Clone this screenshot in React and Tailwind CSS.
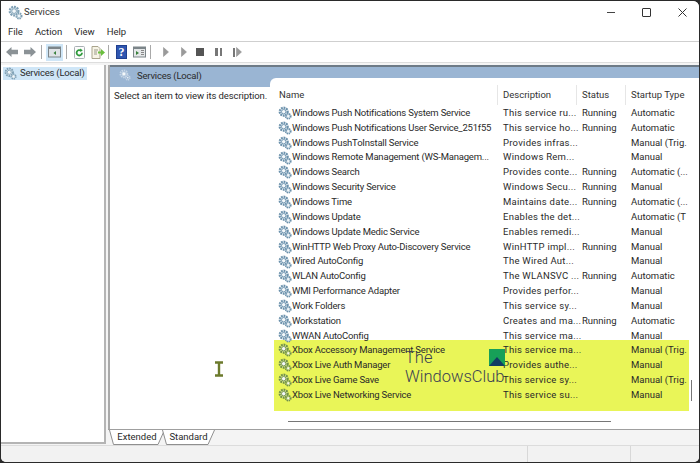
import React from 'react';

const ROWS = [
    ['Windows Push Notifications System Service', 'This service ru...', 'Running', 'Automatic'],
    ['Windows Push Notifications User Service_251f55', 'This service ho...', 'Running', 'Automatic'],
    ['Windows PushToInstall Service', 'Provides infras...', '', 'Manual (Trig.'],
    ['Windows Remote Management (WS-Managem...', 'Windows Rem...', '', 'Manual'],
    ['Windows Search', 'Provides conte...', 'Running', 'Automatic (...'],
    ['Windows Security Service', 'Windows Secu...', 'Running', 'Manual'],
    ['Windows Time', 'Maintains date...', 'Running', 'Automatic (...'],
    ['Windows Update', 'Enables the det...', '', 'Automatic (T'],
    ['Windows Update Medic Service', 'Enables remedi...', '', 'Manual'],
    ['WinHTTP Web Proxy Auto-Discovery Service', 'WinHTTP impl...', 'Running', 'Manual'],
    ['Wired AutoConfig', 'The Wired Aut...', '', 'Manual'],
    ['WLAN AutoConfig', 'The WLANSVC ...', 'Running', 'Automatic'],
    ['WMI Performance Adapter', 'Provides perfor...', '', 'Manual'],
    ['Work Folders', 'This service sy...', '', 'Manual'],
    ['Workstation', 'Creates and ma...', 'Running', 'Automatic'],
    ['WWAN AutoConfig', 'This service ma...', '', 'Manual'],
];

const XBOX_ROWS = [
    ['Xbox Accessory Management Service', 'This service ma...', '', 'Manual (Trig.'],
    ['Xbox Live Auth Manager', 'Provides authe...', '', 'Manual'],
    ['Xbox Live Game Save', 'This service sy...', '', 'Manual (Trig.'],
    ['Xbox Live Networking Service', 'This service su...', '', 'Manual'],
];

function Gears({ size = 14, tone = '#6a90ab', fill = '#d5e2ea' }) {
    return (
        <svg width={size} height={size} viewBox="0 0 16 16" className="shrink-0">
            <circle cx="6.500" cy="6.500" r="4.600" fill={fill} stroke={tone} strokeWidth="2.400" strokeDasharray="2 1" />
            <circle cx="6.500" cy="6.500" r="2.500" fill="#f4f8fa" stroke={tone} strokeWidth="1" />
            <circle cx="11.700" cy="11.700" r="2.800" fill={fill} stroke={tone} strokeWidth="2" strokeDasharray="1.500 0.800" />
            <circle cx="11.700" cy="11.700" r="1.100" fill="#f4f8fa" />
        </svg>
    );
}

function Row({ row, tone, fill }) {
    return (
        <div className="flex h-[14.87px] items-center whitespace-nowrap">
            <div className="flex w-[232px] shrink-0 items-center pl-[7px]">
                <Gears tone={tone} fill={fill} />
                <span className="tracking-[-0.2px]">{row[0]}</span>
            </div>
            <div className="w-[79px] shrink-0 tracking-[0.25px]">{row[1]}</div>
            <div className="w-[49px] shrink-0">{row[2]}</div>
            <div className="shrink-0">{row[3]}</div>
        </div>
    );
}

function HeaderCell({ label, className }) {
    return (
        <div className={`flex h-[20px] items-center border-r border-[#e6e6e6] ${className}`}>{label}</div>
    );
}

function Sep({ className }) {
    return <div className={`h-[14px] w-px bg-[#a9a9a9] ${className}`} />;
}

function Play({ className }) {
    return (
        <svg width="6" height="10" viewBox="0 0 6 10" className={className}>
            <path d="M.5.500l5 4.500-5 4.500z" fill="#9a9a9a" stroke="#8a8a8a" strokeWidth="0.500" />
        </svg>
    );
}

function Toolbar() {
    return (
        <div className="flex h-[18px] items-center pl-[5px]">
            <svg width="12" height="12" viewBox="0 0 12 12"><path d="M0 6l5.500-5v2.800H12v4.400H5.500V11z" fill="#8b9296" /></svg>
            <svg width="12" height="12" viewBox="0 0 12 12" className="ml-[6px]"><path d="M12 6L6.500 1v2.800H0v4.400h6.500V11z" fill="#8b9296" /></svg>
            <Sep className="ml-[5px]" />
            <div className="ml-[4px] flex h-[17px] w-[17px] items-center justify-center bg-[#cfe6f7]">
                <svg width="13" height="12" viewBox="0 0 13 12"><rect x="0.500" y="1" width="12" height="10" fill="#dfe3e6" stroke="#7c8589" /><rect x="0.500" y="1" width="12" height="2" fill="#7c8589" /><path d="M8 5v4L5.500 7z" fill="#38803a" /></svg>
            </div>
            <Sep className="ml-[3px]" />
            <svg width="11" height="13" viewBox="0 0 11 13" className="ml-[7px]"><rect x="0.500" y="0.500" width="10" height="12" rx="1" fill="#fdfdfd" stroke="#a9b0b4" /><path d="M8 6.800a2.700 2.700 0 1 1-1-2.100" fill="none" stroke="#2f9a3c" strokeWidth="1.800" /><path d="M6 2.500l2.800 1.800-2.300 1.600z" fill="#2f9a3c" /></svg>
            <svg width="14" height="13" viewBox="0 0 14 13" className="ml-[6px]"><path d="M1 .5h6l2 2v10H1z" fill="#f7f4e6" stroke="#a9a48c" /><path d="M3 4h4M3 6h3M3 8h3" stroke="#9b9b8a" /><path d="M7 5.500h3V3l4 3.500-4 3.500V7.500H7z" fill="#6bbf3f" /></svg>
            <Sep className="ml-[3px]" />
            <div className="ml-[7px] flex h-[14px] w-[11px] items-center justify-center border border-[#1f3f8f] bg-[#2f56b0] font-['Liberation_Serif',serif] text-[12px] leading-none font-bold text-white">?</div>
            <svg width="13" height="12" viewBox="0 0 13 12" className="ml-[6px]"><rect x="0.500" y="1" width="12" height="10" fill="#e4e7e8" stroke="#7c8589" /><rect x="0.500" y="1" width="12" height="2" fill="#7c8589" /><path d="M3 5v4l3-2z" fill="#38803a" /><path d="M8 4.500h3M8 6.500h3M8 8.500h3" stroke="#888" /></svg>
            <Sep className="ml-[4px]" />
            <Play className="ml-[12px]" />
            <Play className="ml-[12px]" />
            <div className="ml-[9px] h-[8px] w-[8px] bg-[#555555]" />
            <div className="ml-[11px] flex gap-[2px]"><div className="h-[8px] w-[2.500px] bg-[#777777]" /><div className="h-[8px] w-[2.500px] bg-[#777777]" /></div>
            <div className="ml-[11px] flex items-center gap-[1px]">
                <div className="h-[9px] w-[2px] bg-[#777777]" />
                <Play />
            </div>
        </div>
    );
}

function Tab({ label, width }) {
    return (
        <div className="relative -mr-[3px] flex h-[15px] items-center justify-center" style={{ width }}>
            <svg width={width} height="15" className="absolute inset-0">
                <path d={`M0.500 0L4.500 14.500H${width - 7}L${width - 0.500} 0`} fill="#ffffff" stroke="#8f8f8f" />
            </svg>
            <span className="relative">{label}</span>
        </div>
    );
}

export default function App() {
    return (
        <div className="relative h-[463px] w-[700px] overflow-hidden bg-[#2a2a2a] font-['Roboto','Noto_Sans',sans-serif] text-[9.500px] text-[#2a2a2a]">
            <div className="ml-[1px] mt-[1px] flex h-[461px] w-[698px] flex-col overflow-hidden rounded-b-[5px] rounded-tr-[6px] bg-[#f4f4f4]">
                {/* Title bar */}
                <div className="flex h-[23px] shrink-0 items-center bg-white pl-[7px]">
                    <Gears size={15} tone="#7fa0b5" />
                    <span className="ml-[1px] text-[#333333]">Services</span>
                    <div className="ml-auto flex items-center">
                        <div className="mr-[27px] h-px w-[8px] bg-[#444444]" />
                        <div className="mr-[27px] h-[9px] w-[9px] rounded-[1px] border border-[#333333]" />
                        <svg width="9" height="9" viewBox="0 0 9 9" className="mr-[12px]"><path d="M.5.500l8 8M8.500.500l-8 8" stroke="#333" /></svg>
                    </div>
                </div>

                {/* Menu */}
                <div className="flex h-[18px] shrink-0 items-center gap-[12px] border-b border-[#cfcfcf] bg-white pl-[7px]">
                    <span>File</span>
                    <span>Action</span>
                    <span>View</span>
                    <span>Help</span>
                </div>

                <div className="shrink-0 border-b border-[#dddddd] bg-white py-[1px]">
                    <Toolbar />
                </div>

                {/* Panes */}
                <div className="flex min-h-0 flex-1 pt-[2px]">
                    <div className="h-[379px] w-[105px] shrink-0 border-r-2 border-b-2 border-[#b4b4b4] bg-white pl-[2px] pt-[2px]">
                        <div className="flex h-[13px] w-[84px] items-center gap-[3px] whitespace-nowrap bg-[#cfe6f7] pl-[1px] tracking-[-0.2px]">
                            <Gears size={13} tone="#7fa0b5" />
                            <span>Services (Local)</span>
                        </div>
                    </div>

                    <div className="ml-[2px] flex min-w-0 flex-1 flex-col">
                        <div className="flex min-h-0 flex-col border-l-2 border-[#a9a9a9]">
                            <div className="flex h-[22px] items-start border-t-2 border-[#6d7a86] bg-[#9ab5d3] pl-[9px] pt-[2px]">
                                <Gears size={12} tone="#c7d6e6" fill="#9ab5d3" />
                                <span className="ml-[6px] tracking-[-0.2px]">Services (Local)</span>
                            </div>
                            <div className="flex h-[342px] bg-white">
                                <div className="w-[160px] shrink-0 whitespace-nowrap pl-[4px] pt-[2px] tracking-[-0.1px]">Select an item to view its description.</div>
                                <div className="-mt-[9px] flex h-[351px] min-w-0 flex-1 flex-col rounded-tl-[6px] bg-white">
                                    <div className="flex text-[#333333]">
                                        <HeaderCell label="Name" className="mt-[7px] w-[228px] pl-[9px]" />
                                        <HeaderCell label="Description" className="mt-[7px] w-[79px] pl-[5px]" />
                                        <HeaderCell label="Status" className="mt-[7px] w-[49px] pl-[5px]" />
                                        <HeaderCell label="Startup Type" className="mt-[7px] flex-1 border-r-0 pl-[5px]" />
                                    </div>
                                    <div className="pl-[1px] pt-[0.5px]">
                                        {ROWS.map(row => <Row key={row[0]} row={row} />)}
                                        <div className="mr-[10px] ml-[3px] -mt-[3.500px] h-[71px] bg-[#e9f558] pt-[3px]">
                                            <div className="-ml-[3px]">
                                                {XBOX_ROWS.map(row => <Row key={row[0]} row={row} tone="#6f8f4a" fill="#cfe08a" />)}
                                            </div>
                                        </div>
                                    </div>
                                    <div className="mt-[10px] ml-[18px] h-[1.500px] w-[323px] bg-[#777777]" />
                                </div>
                            </div>
                        </div>

                        {/* Tabs */}
                        <div className="flex h-[16px] shrink-0 border-t border-[#9f9f9f] pl-[1px]">
                            <Tab label="Extended" width={56} />
                            <Tab label="Standard" width={53} />
                        </div>
                    </div>
                </div>

                {/* Status bar */}
                <div className="flex h-[17px] shrink-0 justify-end border-t border-[#dcdcdc] bg-[#f2f2f2]">
                    <div className="w-[103px] border-l border-[#d8d8d8]" />
                    <div className="w-[69px] border-l border-[#d8d8d8]" />
                </div>
            </div>

            {/* Scrollbar thumb */}
            <div className="absolute left-[691px] top-[380px] h-[21px] w-px bg-[#777777]" />

            {/* Text cursor */}
            <svg width="10" height="16" viewBox="0 0 10 16" className="absolute left-[214px] top-[361px]">
                <path d="M1 1.500h8M1 14.500h8M5 1.500v13" stroke="#6c7a2c" strokeWidth="2.400" fill="none" />
            </svg>

            {/* Watermark */}
            <div className="absolute left-[405px] top-[348px] text-[16.500px] leading-[19px] font-light text-[#3b3f52]">
                <div>The</div>
                <div>WindowsClub</div>
            </div>
            <svg width="16" height="17" viewBox="0 0 16 17" className="absolute left-[489px] top-[349px]">
                <rect width="16" height="17" fill="#17a058" />
                <path d="M0 17L8 8l8 9z" fill="#123d63" />
            </svg>
        </div>
    );
}
